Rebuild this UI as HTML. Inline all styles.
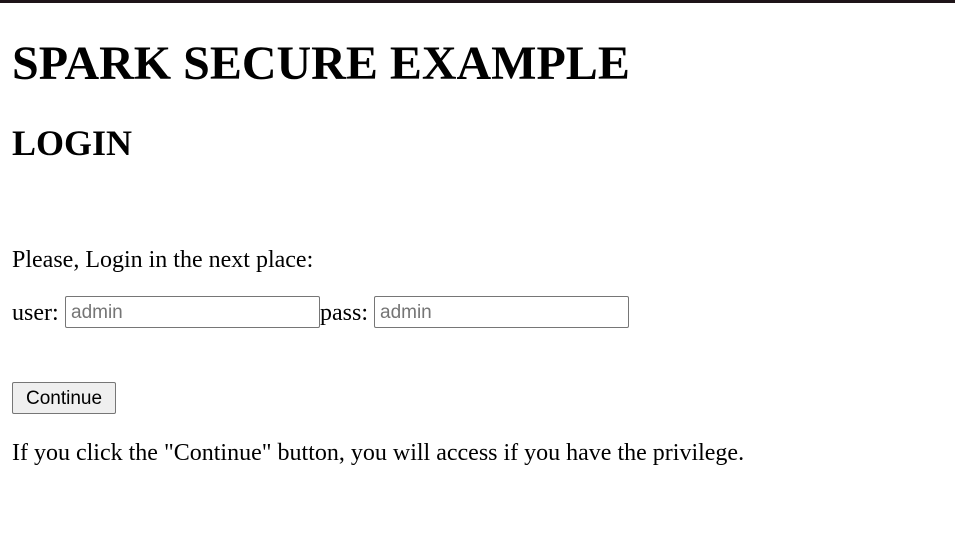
<!DOCTYPE html>
<html><head><style>
body{margin:0;background:#fff;font-family:"Liberation Serif",serif;color:#000;}
.bar{position:absolute;left:0;top:0;width:955px;height:3px;background:#1e1418;}
.t{position:absolute;white-space:nowrap;margin:0;}
h1.t{font-size:48px;font-weight:bold;top:34px;left:12px;line-height:60px;}
h2.t{font-size:36px;font-weight:bold;top:122px;left:12px;line-height:42px;}
.p{font-size:24px;left:12px;line-height:24px;}
.in{position:absolute;box-sizing:border-box;border:1px solid #767676;border-radius:2px;height:32px;width:255px;font:19px "Liberation Sans",sans-serif;color:#757575;padding:4px 5px 0;line-height:24px;}
.btn{position:absolute;left:12px;top:382px;width:104px;height:32px;box-sizing:border-box;border:1px solid #767676;border-radius:2px;background:#efefef;font:19px "Liberation Sans",sans-serif;text-align:center;line-height:31px;}
</style></head><body>
<div class="bar"></div>
<h1 class="t">SPARK SECURE EXAMPLE</h1>
<h2 class="t">LOGIN</h2>
<div class="t p" style="top:248px">Please, Login in the next place:</div>
<div class="t p" style="top:301px">user:</div>
<div class="in" style="left:65px;top:296px">admin</div>
<div class="t p" style="top:301px;left:320px">pass:</div>
<div class="in" style="left:374px;top:296px">admin</div>
<div class="btn">Continue</div>
<div class="t p" style="top:441px">If you click the "Continue" button, you will access if you have the privilege.</div>
</body></html>
